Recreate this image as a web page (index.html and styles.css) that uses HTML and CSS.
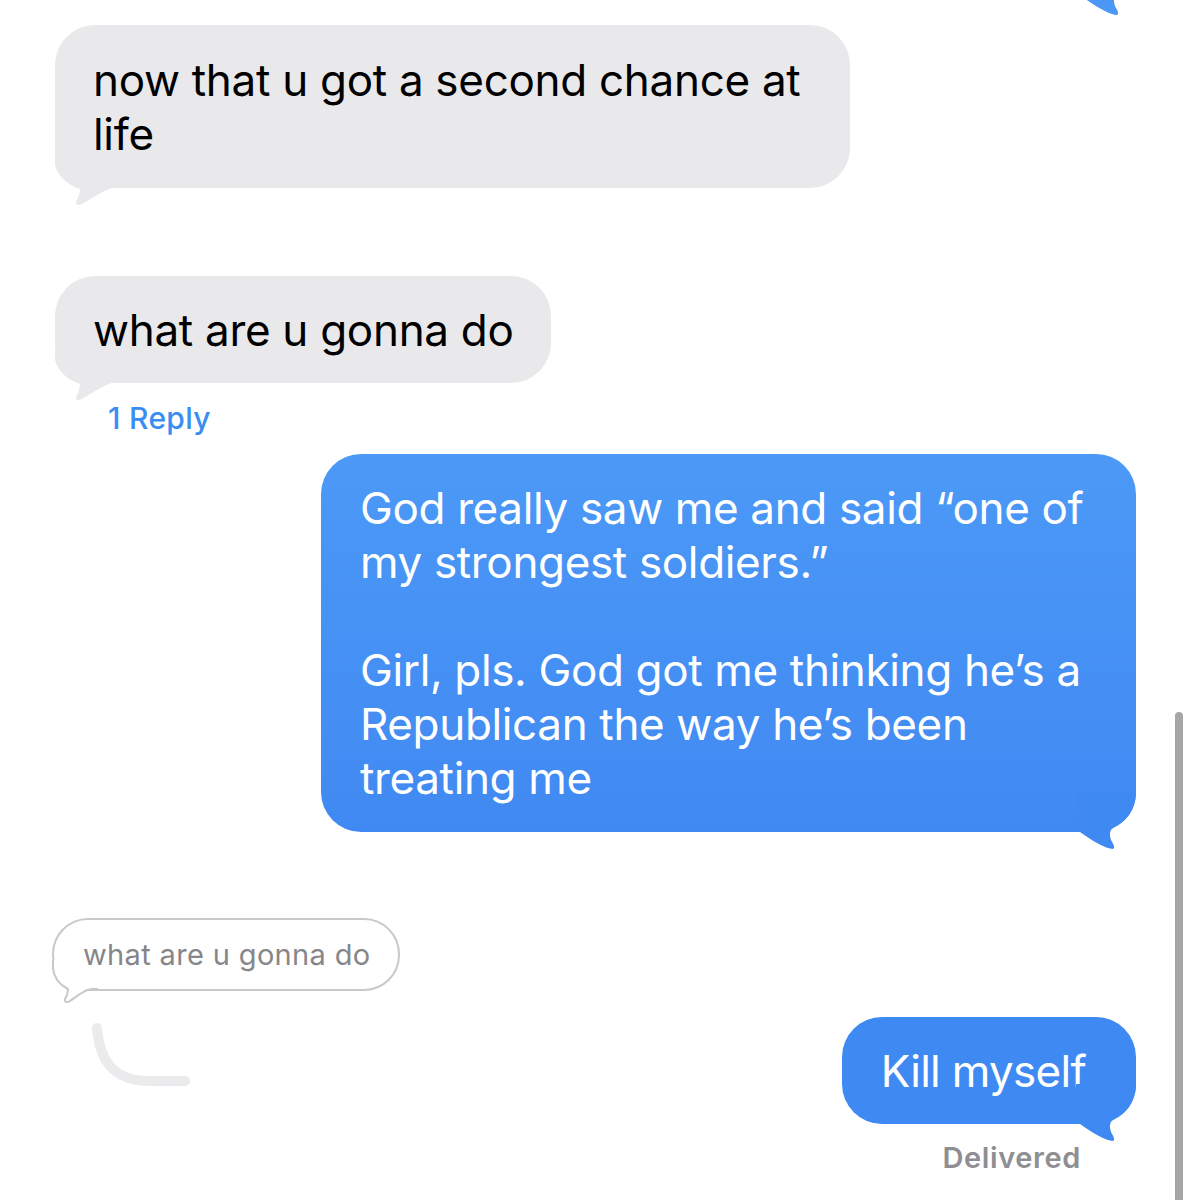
FILE: index.html
```html
<!DOCTYPE html>
<html lang="en">
<head>
  <meta charset="UTF-8">
  <meta name="viewport" content="width=device-width, initial-scale=1.0">
  <title>Messages</title>
  <link rel="stylesheet" href="styles.css">
</head>
<body>

  <div class="chat">

    <!-- bubble cut off above the screen, only the tail shows -->
    <div class="row out">
      <div class="bubble sent cut">
        <svg class="tail tail-right" width="60" height="60" viewBox="0 0 60 60"><path d="M0 0H60C60 18 50 30 38 35C33 38 33 44 36 50C38 53 39 56 37 57C30 57 15 48 4 40H0Z"/></svg>
      </div>
    </div>

    <div class="row in">
      <div class="bubble got wide-got">
        now that u got a second chance at<br>life
        <svg class="tail tail-left" width="60" height="60" viewBox="0 0 60 60"><path d="M60 0H0V12C3 24 15 33 25 36C25 40 23 45 21 49C20 52 23 53 27 51C36 46 47 38 57 35H60Z"/></svg>
      </div>
    </div>

    <div class="row in gap">
      <div class="bubble got">
        what are u gonna do
        <svg class="tail tail-left" width="60" height="60" viewBox="0 0 60 60"><path d="M60 0H0V12C3 24 15 33 25 36C25 40 23 45 21 49C20 52 23 53 27 51C36 46 47 38 57 35H60Z"/></svg>
      </div>
    </div>
    <div class="replies">1 Reply</div>

    <div class="row out">
      <div class="bubble sent wide-sent">
        God really saw me and said “one of<br>my strongest soldiers.”<br><br>Girl, pls. God got me thinking he’s a<br>Republican the way he’s been<br>treating me
        <svg class="tail tail-right" width="60" height="60" viewBox="0 0 60 60"><path d="M0 0H60C60 18 50 30 38 35C33 38 33 44 36 50C38 53 39 56 37 57C30 57 15 48 4 40H0Z"/></svg>
      </div>
    </div>

    <!-- reply thread -->
    <div class="row in quote-row">
      <div class="quote">
        <span class="quote-text">what are u gonna do</span>
        <svg class="quote-tail" width="46" height="46" viewBox="0 0 46 46">
          <path class="fill" d="M0 0H46V27H38C31 31 24 37 18 41C14 43 12 41 14 38C16 35 17 32 16 29C8 25 2 18 1 8V0Z"/>
          <path class="line" d="M1 0V8C2 18 8 25 16 29C16 33 15 36 13 39C12 42 15 43 18 41C24 37 31 30 40 29H46"/>
        </svg>
      </div>
    </div>

    <div class="thread">
      <svg class="thread-line" width="110" height="70" viewBox="0 0 110 70">
        <path d="M7 8C10 43 25 61 60 61H95"/>
      </svg>
      <div class="bubble sent last">
        Kill myself
        <svg class="tail tail-right" width="60" height="60" viewBox="0 0 60 60"><path d="M0 0H60C60 18 50 30 38 35C33 38 33 44 36 50C38 53 39 56 37 57C30 57 15 48 4 40H0Z"/></svg>
      </div>
    </div>
    <div class="status">Delivered</div>

  </div>

  <div class="scrollbar"></div>

</body>
</html>
```

FILE: styles.css
```css
body {
  margin: 0;
  height: 1200px;
  overflow: hidden;
  background: #fff;
  font-family: 'Inter', 'Liberation Sans', sans-serif;
  position: relative;
}

.chat {
  padding-top: 25px;
}

.row {
  display: flex;
}

.row.in {
  justify-content: flex-start;
  padding-left: 55px;
}

.row.out {
  justify-content: flex-end;
  padding-right: 55px;
}

.row.gap {
  margin-top: 88px;
}

.bubble {
  position: relative;
  box-sizing: border-box;
  padding: 27px 37px 26px 38px;
  border-radius: 40px;
  font-size: 44px;
  line-height: 54px;
  letter-spacing: -0.3px;
  white-space: nowrap;
}

.bubble.got {
  background: #e9e9eb;
  color: #000;
}

.bubble.sent {
  background: linear-gradient(#4c99f7, #4089f2);
  color: #fff;
  padding-left: 39px;
  padding-right: 50px;
}

.wide-got {
  width: 795px;
  padding-top: 28px;
  padding-bottom: 27px;
}

.wide-sent {
  width: 815px;
  margin-top: 18px;
  padding-bottom: 27px;
  letter-spacing: -0.35px;
}

.bubble.cut {
  width: 300px;
  height: 60px;
  margin-top: -87px;
  margin-bottom: 27px;
  padding: 0;
  background: #4a97f6;
}

.bubble.cut .tail {
  right: -4px;
}

.bubble.last {
  background: #3f8af2;
  letter-spacing: -0.7px;
}

.tail {
  position: absolute;
  bottom: -20px;
}

.tail-left {
  left: 0;
  bottom: -25px;
  fill: #e9e9eb;
}

.tail-right {
  right: 0;
  fill: #3f89f2;
}

.bubble.cut .tail-right {
  fill: #4a97f6;
}

.replies {
  margin-top: 17px;
  padding-left: 108px;
  font-size: 30px;
  line-height: 36px;
  font-weight: 500;
  letter-spacing: 0.3px;
  color: #3a8ef2;
}

.quote-row {
  margin-top: 86px;
}

.quote {
  position: relative;
  margin-left: -3px;
  padding: 17px 27px 17px 29px;
  border: 2px solid #c9c9cc;
  border-radius: 36px;
  font-size: 29px;
  line-height: 35px;
  color: #86868a;
  letter-spacing: 0.35px;
}

.quote-text {
  position: relative;
  z-index: 1;
}

.quote-tail {
  position: absolute;
  left: -2px;
  bottom: -17px;
}

.quote-tail .fill {
  fill: #fff;
}

.quote-tail .line {
  fill: none;
  stroke: #c9c9cc;
  stroke-width: 2;
}

.thread {
  display: flex;
  justify-content: space-between;
  align-items: flex-start;
  margin-top: 26px;
  padding-left: 90px;
  padding-right: 55px;
}

.thread-line {
  margin-top: 3px;
}

.thread-line path {
  fill: none;
  stroke: #ebebed;
  stroke-width: 10;
  stroke-linecap: round;
}

.status {
  margin-top: 17px;
  padding-right: 110px;
  text-align: right;
  font-size: 29px;
  line-height: 34px;
  font-weight: 600;
  letter-spacing: 0.6px;
  color: #8e8e93;
}

.scrollbar {
  position: absolute;
  right: 8px;
  top: 712px;
  bottom: 0;
  width: 8px;
  border-radius: 4px 4px 0 0;
  background: #a6a6a8;
}
```
